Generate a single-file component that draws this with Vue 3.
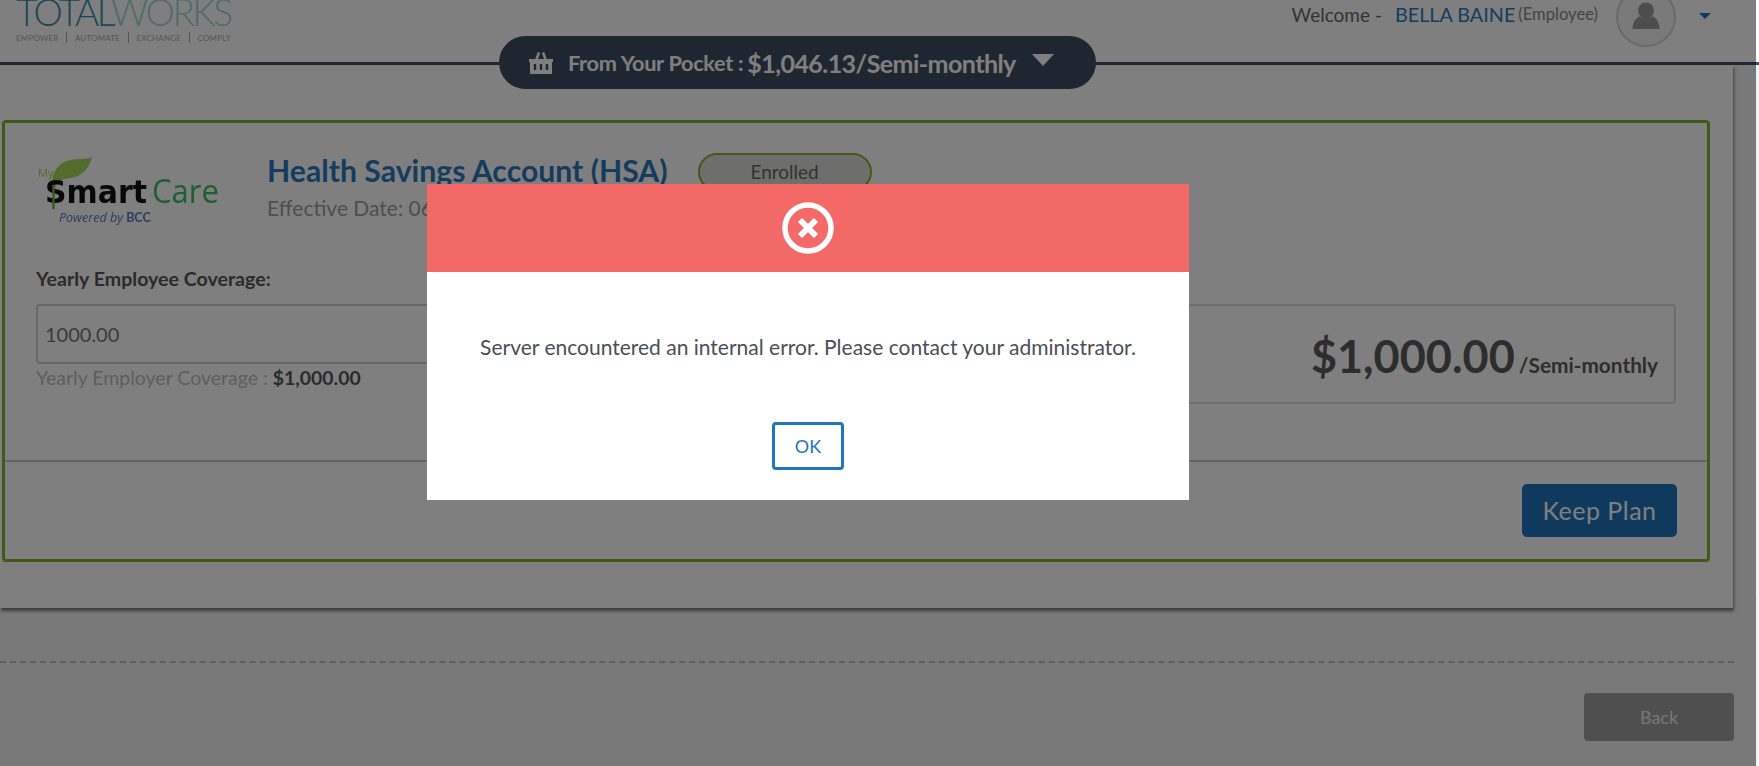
<template>
  <div class="page">
    <header class="top_bar">
      <div class="brand">
        <div class="wordmark"><span class="word_dark">TOTAL</span><span class="word_light">WORKS</span></div>
        <div class="tagline">
          <span>EMPOWER</span><i></i><span>AUTOMATE</span><i></i><span>EXCHANGE</span><i></i><span>COMPLY</span>
        </div>
      </div>
      <div class="user_box">
        <span class="welcome">Welcome -</span>
        <span class="user_name">BELLA BAINE</span>
        <span class="user_role">(Employee)</span>
        <div class="avatar">
          <svg width="30" height="30" viewBox="0 0 30 30">
            <circle cx="15" cy="8.5" r="8" fill="#9a9a9a" />
            <path d="M1.5 27 C1.5 20 5 15.5 9 14.6 C11 17.2 19 17.2 21 14.6 C25 15.5 28.5 20 28.5 27 Z" fill="#9a9a9a" />
          </svg>
        </div>
        <span class="user_caret"></span>
      </div>
    </header>

    <div class="pocket_pill">
      <svg class="basket" width="26" height="24" viewBox="0 0 26 24">
        <path d="M8.5 8 L11 1.5 M17.5 8 L15 1.5" stroke="#fff" stroke-width="2.6" fill="none" />
        <path d="M1 8 H25 V11 H24 V23 H2 V11 H1 Z" fill="#fff" />
        <path d="M7 13 V19 M13 13 V19 M19 13 V19" stroke="#3c4e62" stroke-width="2.4" />
      </svg>
      <span class="pocket_label">From Your Pocket :</span>
      <span class="pocket_amount">{{ pocketAmount }}</span>
      <span class="pocket_caret"></span>
    </div>

    <main class="panel">
      <section class="plan_card">
        <div class="plan_top">
          <div class="plan_head">
            <svg class="smart_logo" width="190" height="72" viewBox="0 0 190 72">
              <path d="M20 30 C20 14 26 7 35 4 C44 1 54 3 60 0 C58 10 50 20 38 21 C30 22 25 24 23 31 Z" fill="#a4d85c" />
              <text x="6" y="20" class="logo_my">My</text>
              <text x="13" y="46" class="logo_smart" textLength="102" lengthAdjust="spacingAndGlyphs">Smart</text>
              <path d="M21.5 28 V52" stroke="#6fb04a" stroke-width="2.4" />
              <text x="120" y="46" class="logo_care" textLength="67" lengthAdjust="spacingAndGlyphs">Care</text>
              <text x="27" y="65" class="logo_powered">Powered by <tspan class="logo_bcc">BCC</tspan></text>
            </svg>
            <div class="plan_title">
              <div class="title_row">
                <h2>Health Savings Account (HSA)</h2>
                <span class="enrolled">Enrolled</span>
              </div>
              <div class="effective">Effective Date: 06/01/2021</div>
            </div>
          </div>
          <label class="coverage_label">Yearly Employee Coverage:</label>
          <div class="coverage_grid">
            <div>
              <input class="coverage_input" type="text" :value="coverage" readonly />
              <div class="employer">Yearly Employer Coverage : <b>$1,000.00</b></div>
            </div>
            <div class="amount_box">
              <span class="amount">$1,000.00</span>
              <span class="amount_unit">/Semi-monthly</span>
            </div>
          </div>
        </div>
        <div class="plan_bottom">
          <button class="keep_button">Keep Plan</button>
        </div>
      </section>
    </main>

    <div class="dash_line"></div>
    <div class="page_actions">
      <button class="back_button">Back</button>
    </div>

    <div class="edge_line"></div>

    <!-- error dialog -->
    <div v-if="showError" class="overlay">
      <div class="dialog">
        <div class="dialog_head">
          <svg width="52" height="52" viewBox="0 0 52 52">
            <circle cx="26" cy="26" r="23" fill="none" stroke="#fff" stroke-width="5.5" />
            <path d="M18 18 L34 34 M34 18 L18 34" stroke="#fff" stroke-width="6" />
          </svg>
        </div>
        <div class="dialog_body">
          <p>{{ errorText }}</p>
          <button class="ok_button" @click="showError = false">OK</button>
        </div>
      </div>
    </div>
  </div>
</template>

<script setup>
import { ref } from 'vue'

const pocketAmount = '$1,046.13/Semi-monthly'
const coverage = '1000.00'
const errorText = 'Server encountered an internal error. Please contact your administrator.'
const showError = ref(true)
</script>

<style>
html,
body {
  margin: 0;
  overflow: hidden;
}
</style>

<style scoped>
* {
  box-sizing: border-box;
  font-family: Lato, 'Open Sans', sans-serif;
}
.page {
  position: relative;
  height: 766px;
  overflow: hidden;
  background: #f2f2f2;
}
.top_bar {
  display: flex;
  justify-content: space-between;
  align-items: flex-start;
  height: 65px;
  background: #fff;
  border-bottom: 3px solid #3c4e62;
}
.brand {
  padding-left: 16px;
  margin-top: -7px;
}
.wordmark {
  font-size: 37px;
  font-weight: 300;
  line-height: 38px;
  letter-spacing: -2.5px;
  white-space: nowrap;
}
.word_dark {
  color: #3a8cb0;
}
.word_light {
  color: #9cd8d8;
}
.tagline {
  display: flex;
  align-items: center;
  margin-top: 1px;
  width: 215px;
  justify-content: space-between;
  font-size: 8px;
  letter-spacing: 0.2px;
  color: #aaa;
}
.tagline i {
  width: 1px;
  height: 11px;
  background: #aaa;
}
.user_box {
  display: flex;
  align-items: center;
  margin-top: -13px;
  margin-right: 48px;
  color: #666;
}
.welcome {
  font-size: 19px;
  margin: -6px 13px 0 0;
}
.user_name {
  font-size: 19.8px;
  color: #2a78bd;
  margin: -6px 3px 0 0;
}
.user_role {
  font-size: 16.6px;
  color: #888;
  margin: -6px 18px 0 0;
}
.avatar {
  display: flex;
  align-items: center;
  justify-content: center;
  width: 60px;
  height: 60px;
  border-radius: 50%;
  border: 2px solid #d4d4d4;
  background: #f4f4f4;
  margin-right: 23px;
}
.user_caret {
  width: 0;
  height: 0;
  margin-top: -2px;
  border-left: 6px solid transparent;
  border-right: 6px solid transparent;
  border-top: 6px solid #2072bc;
}
.pocket_pill {
  position: absolute;
  top: 36px;
  left: 499px;
  display: flex;
  align-items: center;
  width: 597px;
  height: 53px;
  padding-left: 29px;
  border-radius: 27px;
  background: #3c4e62;
  color: #fff;
}
.basket {
  margin-right: 14px;
}
.pocket_label {
  font-size: 21.7px;
  font-weight: 700;
  margin-right: 4px;
  letter-spacing: -0.3px;
}
.pocket_amount {
  font-size: 25px;
  font-weight: 700;
  letter-spacing: -0.55px;
}
.pocket_caret {
  width: 0;
  height: 0;
  margin: -6px 0 0 16px;
  border-left: 11px solid transparent;
  border-right: 11px solid transparent;
  border-top: 12px solid #fff;
}
.panel {
  width: 1733px;
  height: 543px;
  padding: 55px 0 0 2px;
  background: #fff;
  box-shadow: 1px 3px 3px rgba(0, 0, 0, 0.5);
}
.plan_card {
  width: 1708px;
  height: 442px;
  border: 3px solid #7fb52e;
  border-radius: 4px;
}
.plan_top {
  height: 339px;
  padding: 32px 31px 0;
  border-bottom: 2px solid #c4c4c4;
}
.plan_head {
  display: flex;
  height: 112px;
}
.smart_logo {
  flex: none;
  margin: 2px 0 0 -4px;
  filter: blur(0.4px);
}
.logo_my {
  font: 11px 'Open Sans', sans-serif;
  fill: #a4d85c;
}
.logo_smart {
  font: 700 32px 'DejaVu Sans', sans-serif;
  fill: #111;
}
.logo_care {
  font: 400 33px 'Open Sans', sans-serif;
  fill: #38c060;
}
.logo_powered {
  font: italic 12.5px 'Open Sans', sans-serif;
  fill: #5a74c4;
}
.logo_bcc {
  font-weight: 700;
  font-style: normal;
}
.plan_title {
  margin: -3px 0 0 45px;
}
.title_row {
  display: flex;
  align-items: flex-start;
}
.title_row h2 {
  margin: 0;
  font-size: 30.2px;
  line-height: 36px;
  font-weight: 700;
  color: #2a78bd;
  white-space: nowrap;
}
.enrolled {
  width: 174px;
  height: 38px;
  margin: 1px 0 0 30px;
  border: 2px solid #7fb52e;
  border-radius: 19px;
  background: #dcdfd8;
  color: #666;
  font-size: 19px;
  line-height: 34px;
  text-align: center;
}
.effective {
  margin-top: 4px;
  font-size: 21px;
  line-height: 26px;
  color: #9c9c9c;
}
.coverage_label {
  display: block;
  font-size: 19.6px;
  line-height: 24px;
  font-weight: 700;
  color: #555;
}
.coverage_grid {
  display: grid;
  grid-template-columns: 770px 1fr;
  gap: 24px;
  margin-top: 13px;
}
.coverage_input {
  display: block;
  width: 100%;
  height: 60px;
  padding: 0 7px;
  border: 2px solid #cfcfcf;
  border-radius: 4px;
  background: #fff;
  color: #777;
  font-size: 20px;
  outline: none;
}
.employer {
  margin-top: 1px;
  font-size: 19.5px;
  line-height: 26px;
  color: #bdbdbd;
}
.employer b {
  font-size: 19.4px;
  font-weight: 700;
  color: #555;
}
.amount_box {
  display: flex;
  align-items: baseline;
  justify-content: flex-end;
  height: 100px;
  padding: 21px 16px 0 0;
  border: 2px solid #dadada;
  border-radius: 4px;
}
.amount {
  font-size: 45px;
  line-height: 58px;
  font-weight: 700;
  color: #5a5a5a;
}
.amount_unit {
  margin-left: 4px;
  font-size: 20.8px;
  font-weight: 700;
  color: #5a5a5a;
}
.plan_bottom {
  display: flex;
  justify-content: flex-end;
  padding: 22px 30px 0 0;
}
.keep_button {
  width: 155px;
  height: 53px;
  padding-bottom: 3px;
  border: 0;
  border-radius: 5px;
  background: #2072bc;
  color: #fff;
  font-size: 25px;
  letter-spacing: 0.5px;
}
.dash_line {
  width: 1734px;
  margin-top: 53px;
  border-top: 2px dashed #bdbdbd;
}
.page_actions {
  display: flex;
  justify-content: flex-end;
  width: 1734px;
  margin-top: 30px;
}
.back_button {
  width: 150px;
  height: 48px;
  border: 0;
  border-radius: 4px;
  background: #9e9e9e;
  color: #eee;
  font-size: 18px;
}
.edge_line {
  position: absolute;
  top: 595px;
  right: 0;
  width: 1px;
  bottom: 0;
  background: #fff;
  z-index: 3;
}
.overlay {
  position: absolute;
  top: 0;
  left: 0;
  right: 3px;
  bottom: 0;
  z-index: 2;
  padding: 184px 0 0 427px;
  background: rgba(0, 0, 0, 0.5);
}
.dialog {
  width: 762px;
  height: 316px;
  background: #fff;
}
.dialog_head {
  display: flex;
  align-items: center;
  justify-content: center;
  height: 88px;
  background: #f36967;
}
.dialog_body {
  display: flex;
  flex-direction: column;
  align-items: center;
  padding-top: 62px;
}
.dialog_body p {
  margin: 0;
  font-size: 21px;
  line-height: 26px;
  color: #4a4f55;
}
.ok_button {
  width: 72px;
  height: 48px;
  margin-top: 62px;
  border: 3px solid #1f75c0;
  border-radius: 4px;
  background: #fff;
  color: #1f75c0;
  font-size: 18px;
}
</style>
